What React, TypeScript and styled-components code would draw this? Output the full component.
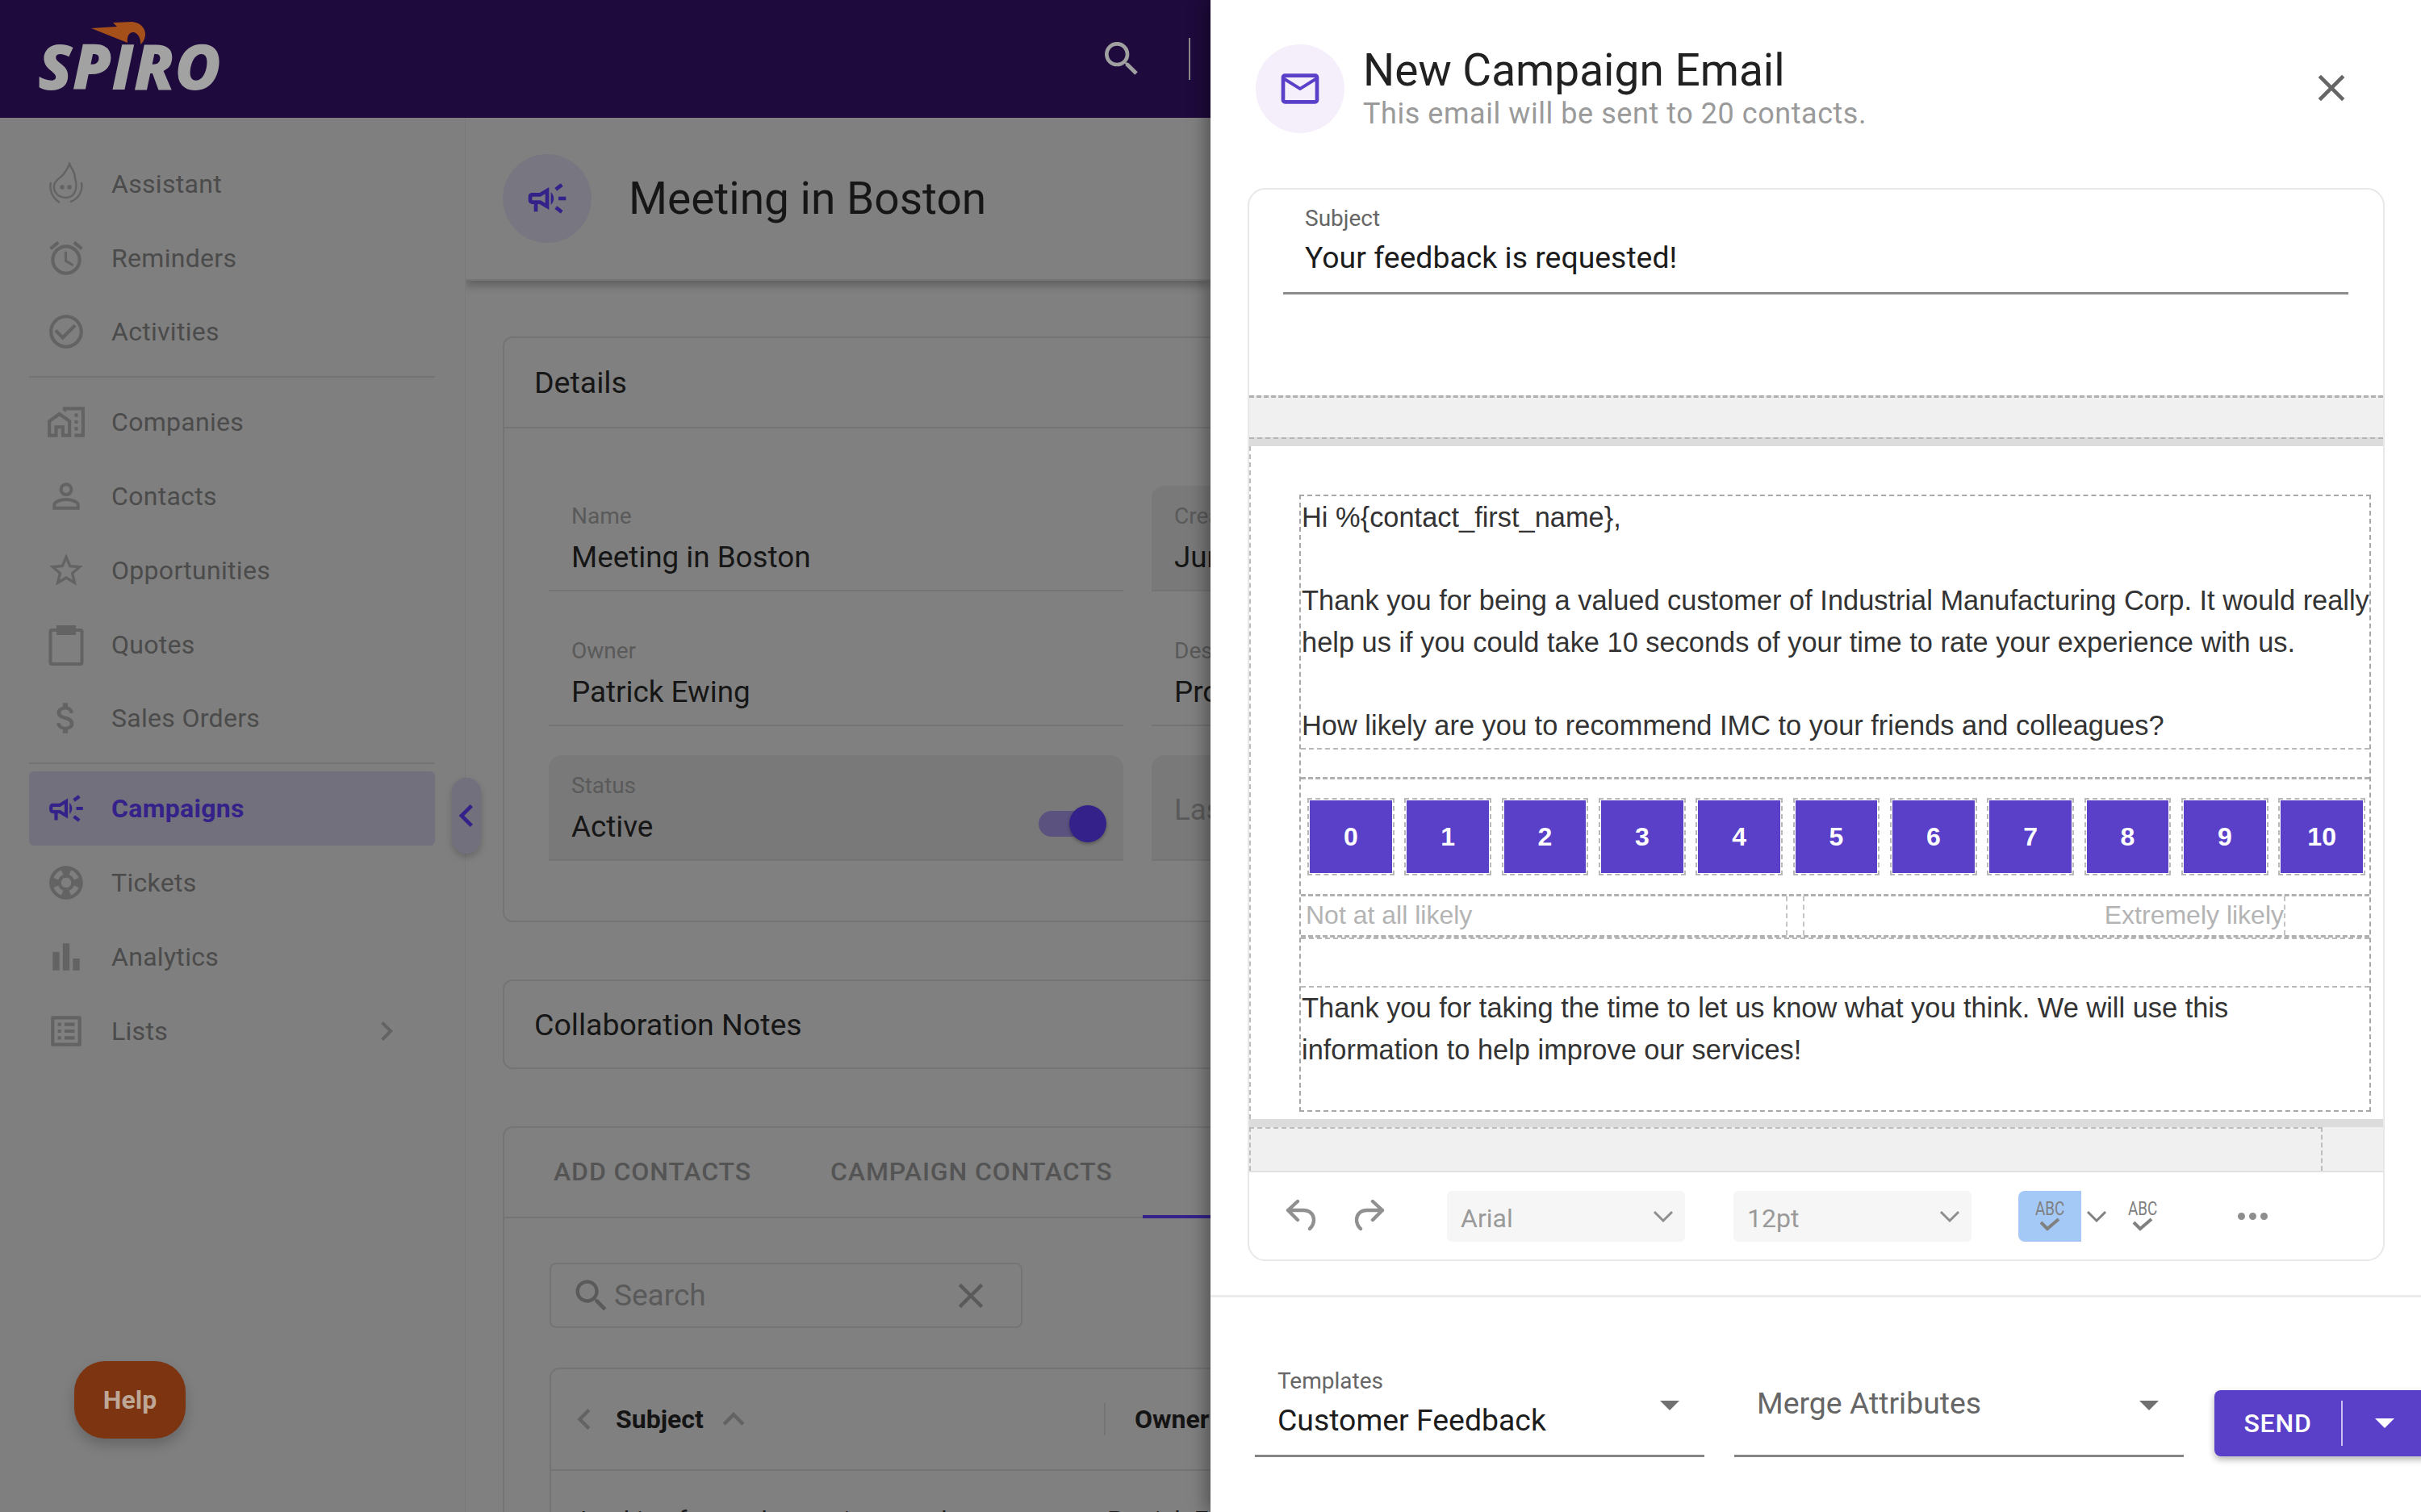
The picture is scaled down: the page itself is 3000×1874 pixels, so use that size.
import React from "react"
import styled, { createGlobalStyle } from "styled-components"
import {
    MdAttachMoney, MdBarChart, MdCheckCircleOutline, MdChevronLeft, MdChevronRight, MdClose,
    MdKeyboardArrowUp, MdListAlt, MdMailOutline, MdOutlineAlarm, MdOutlineCampaign,
    MdOutlineMapsHomeWork, MdPersonOutline, MdSearch, MdStarBorder, MdSupport,
} from "react-icons/md"

const GlobalStyle = createGlobalStyle`
    html, body {
        margin: 0;
        padding: 0;
        background: #808080;
    }
    * {
        box-sizing: border-box;
    }
`

const Page = styled.div`
    display: flex;
    width: 3000px;
    height: 1874px;
    overflow: hidden;
    font-family: Roboto, "Liberation Sans", sans-serif;
`

const Backdrop = styled.div`
    display: flex;
    flex-direction: column;
    flex: 0 0 1500px;
    min-width: 0;
    background: #808080;
`

const TopBar = styled.header`
    flex: 0 0 146px;
    display: flex;
    align-items: center;
    padding: 0 25px 0 47px;
    background: #1e0a3c;
`

const Logo = styled.div`
    position: relative;
    width: 228px;
    height: 146px;
    display: flex;
    align-items: flex-end;
    padding-bottom: 26px;
    font-family: "Open Sans", Lato, sans-serif;
    font-size: 78px;
    line-height: 1;
    font-weight: 800;
    font-style: italic;
    color: #a2a2a2;
    svg {
        position: absolute;
        left: 65px;
        top: 27px;
    }
`

const TopSearch = styled.div`
    margin-left: auto;
    display: flex;
    color: #a0a0a0;
    margin-right: 55px;
`

const TopDivider = styled.div`
    width: 2px;
    height: 52px;
    background: #8a8a8a;
`

const Body = styled.div`
    flex: 1;
    min-height: 0;
    display: flex;
`

const Sidebar = styled.nav`
    position: relative;
    flex: 0 0 577px;
    padding: 36px 37px 0 36px;
    background: #7f7f7f;
    border-right: 1px solid #7a7a7a;
`

const NavRow = styled.div<{ $active?: boolean }>`
    display: flex;
    align-items: center;
    height: 91.8px;
    padding-left: 21px;
    border-radius: 6px;
    background: ${props => props.$active ? "#72707c" : "transparent"};
    color: ${props => props.$active ? "#34228a" : "#4b4b4b"};
    font-size: 32px;
    letter-spacing: 0.3px;
    font-weight: ${props => props.$active ? 700 : 400};
`

const NavIcon = styled.span<{ $active?: boolean }>`
    flex: 0 0 50px;
    min-width: 0;
    display: flex;
    justify-content: center;
    margin-right: 31px;
    color: ${props => props.$active ? "#34228a" : "#636363"};
`

const NavArrow = styled.span`
    display: flex;
    margin-left: auto;
    margin-right: 36px;
    color: #636363;
`

const NavDivider = styled.div<{ $h: number }>`
    height: ${props => props.$h}px;
    display: flex;
    align-items: center;
    &::before {
        content: "";
        width: 100%;
        height: 2px;
        background: #737373;
    }
`

const CollapseHandle = styled.div`
    position: absolute;
    left: 560px;
    top: 818px;
    width: 36px;
    height: 94px;
    border-radius: 18px;
    display: flex;
    align-items: center;
    justify-content: center;
    background: #72707c;
    box-shadow: 0 4px 8px rgba(0, 0, 0, 0.2);
    color: #34228a;
    svg {
        flex: none;
    }
`

const HelpButton = styled.div`
    position: absolute;
    left: 92px;
    top: 1541px;
    width: 138px;
    height: 96px;
    border-radius: 38px;
    display: flex;
    align-items: center;
    justify-content: center;
    background: #7d3411;
    box-shadow: 0 8px 16px rgba(0, 0, 0, 0.2);
    color: #bda797;
    font-size: 32px;
    font-weight: 700;
`

const Main = styled.main`
    flex: 1;
    min-width: 0;
    overflow: hidden;
    display: flex;
    flex-direction: column;
`

const TitleBar = styled.div`
    flex: 0 0 202px;
    display: flex;
    align-items: center;
    gap: 46px;
    padding: 0 0 0 46px;
    border-bottom: 2px solid #747474;
    box-shadow: 0 6px 10px rgba(0, 0, 0, 0.25);
    margin-bottom: 69px;
`

const TitleCircle = styled.div`
    width: 110px;
    height: 110px;
    border-radius: 50%;
    display: flex;
    align-items: center;
    justify-content: center;
    background: #787680;
    color: #34228a;
`

const PageTitle = styled.h1`
    margin: 0;
    font-size: 55px;
    font-weight: 400;
    color: #161616;
    white-space: nowrap;
`

const Stack = styled.div`
    display: flex;
    flex-direction: column;
    gap: 71px;
    width: 1500px;
    margin-left: 46px;
`

const Card = styled.section`
    border: 2px solid #747474;
    border-radius: 12px;
    background: #808080;
`

const CardHead = styled.div<{ $line?: boolean }>`
    height: ${props => props.$line ? "112px" : "107px"};
    display: flex;
    align-items: center;
    padding-left: 37px;
    font-size: 37.5px;
    color: #161616;
    border-bottom: ${props => props.$line ? "2px solid #747474" : "none"};
`

const FieldGrid = styled.div`
    display: grid;
    grid-template-columns: 712px 712px;
    column-gap: 35px;
    row-gap: 36px;
    padding: 71px 0 74px 55px;
`

const Field = styled.div<{ $filled?: boolean }>`
    position: relative;
    height: 131px;
    padding: 22px 0 0 28px;
    border-bottom: 2px solid #747474;
    border-radius: 16px 16px 0 0;
    background: ${props => props.$filled ? "#797979" : "transparent"};
    overflow: hidden;
`

const FieldLabel = styled.div`
    font-size: 28px;
    line-height: 32px;
    color: #5a5a5a;
`

const FieldValue = styled.div`
    margin-top: 13px;
    font-size: 36.8px;
    line-height: 44px;
    color: #161616;
    white-space: nowrap;
`

const FieldHint = styled(FieldValue)`
    margin-top: 24px;
    color: #5a5a5a;
`

const Toggle = styled.div`
    position: absolute;
    right: 29px;
    top: 69px;
    width: 76px;
    height: 32px;
    border-radius: 16px;
    background: #5b5280;
    &::after {
        content: "";
        position: absolute;
        right: -8px;
        top: -7px;
        width: 46px;
        height: 46px;
        border-radius: 50%;
        background: #34228a;
        box-shadow: 0 2px 4px rgba(0, 0, 0, 0.3);
    }
`

const Tabs = styled.div`
    display: flex;
    align-items: stretch;
    height: 112px;
    padding-left: 61px;
    padding-bottom: 2px;
    border-bottom: 2px solid #747474;
`

const Tab = styled.div`
    display: flex;
    align-items: center;
    margin-right: 98px;
    font-size: 32px;
    font-weight: 500;
    letter-spacing: 0.9px;
    color: #545454;
    white-space: nowrap;
`

const ActiveTab = styled.div`
    width: 300px;
    margin-left: -60px;
    border-bottom: 4px solid #34228a;
    margin-bottom: -4px;
`

const SearchBox = styled.div`
    display: flex;
    align-items: center;
    width: 586px;
    height: 81px;
    margin: 55px 0 49px 56px;
    padding: 0 36px 0 24px;
    border: 2px solid #747474;
    border-radius: 8px;
    color: #5a5a5a;
    font-size: 37px;
    svg {
        flex: none;
    }
`

const SearchText = styled.span`
    margin-left: 2px;
    flex: 1;
`

const TableCard = styled.div`
    margin-left: 56px;
    border: 2px solid #747474;
    border-radius: 12px 0 0 0;
`

const TableHead = styled.div`
    display: flex;
    align-items: center;
    height: 126px;
    border-bottom: 2px solid #747474;
    font-size: 32px;
    font-weight: 700;
    color: #141414;
`

const SubjectHead = styled.div`
    flex: 0 0 687px;
    display: flex;
    align-items: center;
    height: 40px;
    padding-left: 15px;
    border-right: 2px solid #747474;
    color: #141414;
    svg {
        flex: none;
        color: #636363;
    }
`

const SubjectLabel = styled.span`
    margin: 0 10px 0 13px;
`

const OwnerHead = styled.div`
    padding-left: 36px;
`

const TableRow = styled(TableHead)`
    height: 90px;
    align-items: flex-start;
    padding-top: 42px;
    border-bottom: none;
    font-weight: 400;
    color: #1a1a1a;
`

const RowSubject = styled.div`
    flex: 0 0 689px;
    padding-left: 36px;
`

const Drawer = styled.aside`
    position: relative;
    flex: 0 0 1500px;
    width: 1500px;
    min-width: 0;
    display: flex;
    flex-direction: column;
    background: #fff;
    box-shadow: -6px 0 20px rgba(0, 0, 0, 0.35);
`

const DrawerHead = styled.div`
    flex: 0 0 233px;
    display: flex;
    align-items: flex-start;
    gap: 23px;
    padding: 55px 83px 0 56px;
`

const MailCircle = styled.div`
    flex: 0 0 110px;
    height: 110px;
    border-radius: 50%;
    display: flex;
    align-items: center;
    justify-content: center;
    background: #f5effc;
    color: #5a3fc9;
`

const DrawerTitles = styled.div`
    flex: 1;
    padding-top: 2px;
`

const DrawerTitle = styled.h2`
    margin: 0;
    font-size: 55px;
    line-height: 60px;
    font-weight: 400;
    color: #212121;
`

const DrawerSub = styled.div`
    margin-top: 2px;
    font-size: 36px;
    line-height: 44px;
    letter-spacing: 0.55px;
    color: #9a9a9a;
`

const CloseButton = styled.div`
    display: flex;
    margin-top: 26px;
    color: #666;
`

const Composer = styled.section`
    flex: 0 0 1330px;
    margin: 0 45px 0 46px;
    display: flex;
    flex-direction: column;
    border: 2px solid #e8e8e8;
    border-radius: 22px;
    overflow: hidden;
`

const SubjectBlock = styled.div`
    flex: 0 0 255px;
    padding: 18px 43px 0 42px;
`

const SubjectField = styled.div`
    height: 112px;
    padding: 2px 0 0 27px;
    border-bottom: 3px solid #8c8c8c;
`

const SubjectCaption = styled.div`
    font-size: 28px;
    line-height: 32px;
    color: #666;
`

const SubjectValue = styled.div`
    margin-top: 10px;
    font-size: 37.4px;
    line-height: 44px;
    color: #1c1c1c;
`

const BandLight = styled.div`
    flex: 0 0 52px;
    background: #f0f0f0;
    border-top: 3px dashed #b0b0b0;
`

const BandDark = styled.div`
    flex: 0 0 11px;
    background: #dcdcdc;
    border-top: 2px dashed #b5b5b5;
`

const EmailArea = styled.div`
    flex: 0 0 834px;
    padding: 60px 15px 9px 60px;
    border-left: 2px dashed #bdbdbd;
`

const EmailBox = styled.div`
    height: 765px;
    display: flex;
    flex-direction: column;
    border: 2px dashed #a8a8a8;
    font-family: "Liberation Sans", Arial, sans-serif;
    font-size: 34.4px;
    color: #333;
`

const Copy = styled.div<{ $h: number; $shift: number }>`
    flex: none;
    height: ${props => props.$h}px;
    padding: ${props => props.$shift}px 0 0 1px;
    line-height: 51.6px;
    white-space: nowrap;
`

const BlankRow = styled.div<{ $h: number }>`
    flex: none;
    height: ${props => props.$h}px;
    border-top: 2px dashed #b8b8b8;
`

const RatingRow = styled.div`
    display: grid;
    grid-template-columns: repeat(11, 1fr);
    column-gap: 18.6px;
    padding: 26px 8px 26px 11px;
    border-top: 3px dashed #b0b0b0;
`

const RatingCell = styled.div`
    height: 90px;
    display: flex;
    align-items: center;
    justify-content: center;
    background: #5a3fc9;
    outline: 2px dashed #b8b8b8;
    outline-offset: 1px;
    color: #fff;
    font-size: 32px;
    font-weight: 700;
`

const ScaleRow = styled.div`
    display: flex;
    height: 55px;
    border-top: 3px dashed #b0b0b0;
    border-bottom: 3px dashed #b0b0b0;
    color: #b4b4b4;
    font-size: 32px;
    line-height: 46px;
`

const ScaleCell = styled.div<{ $w: number; $right?: boolean }>`
    flex: 0 0 ${props => props.$w}px;
    padding-left: 6px;
    text-align: ${props => props.$right ? "right" : "left"};
    border-right: 2px dashed #c4c4c4;
    padding-right: ${props => props.$right ? "0" : "6px"};
`

const BottomDark = styled.div`
    flex: 0 0 10px;
    background: #dcdcdc;
`

const BottomLight = styled.div`
    flex: 1;
    background: #f0f0f0;
    border-bottom: 2px solid #e0e0e0;
`

const BottomFrame = styled.div`
    width: 1330px;
    height: 100%;
    border-top: 2px dashed #bdbdbd;
    border-left: 2px dashed #bdbdbd;
    border-right: 2px dashed #bdbdbd;
`

const EditorBar = styled.div`
    flex: 0 0 108px;
    display: flex;
    align-items: flex-start;
    padding: 23px 0 0 45px;
    color: #8e8e8e;
`

const BarIcon = styled.span<{ $left: number; $top: number }>`
    display: flex;
    margin-left: ${props => props.$left}px;
    margin-top: ${props => props.$top}px;
`

const BarSelect = styled.div<{ $left: number }>`
    flex: 0 0 295px;
    height: 63px;
    margin-left: ${props => props.$left}px;
    display: flex;
    align-items: center;
    justify-content: space-between;
    padding: 0 14px 0 17px;
    border-radius: 6px;
    background: #f6f6f6;
    font-size: 32px;
    color: #9a9a9a;
`

const BarSelectText = styled.span`
    padding-top: 4px;
`

const SpellButton = styled.div<{ $active?: boolean; $left: number }>`
    flex: 0 0 78px;
    height: 63px;
    margin-left: ${props => props.$left}px;
    display: flex;
    flex-direction: column;
    align-items: center;
    justify-content: center;
    border-radius: 8px 0 0 8px;
    background: ${props => props.$active ? "#a5c9f7" : "transparent"};
    color: #808080;
`

const AbcText = styled.span`
    font-size: 23px;
    line-height: 20px;
    transform: scaleX(0.82);
`

const Dots = styled.div`
    display: flex;
    gap: 5px;
    margin: 27px 0 0 79px;
    span {
        width: 9px;
        height: 9px;
        border-radius: 50%;
        background: #8e8e8e;
    }
`

const Footer = styled.div`
    flex: 1;
    margin-top: 42px;
    display: flex;
    align-items: flex-end;
    padding: 0 0 67px 55px;
    border-top: 3px solid #ececec;
`

const SelectField = styled.div<{ $gap: number }>`
    position: relative;
    flex: 0 0 557px;
    height: 110px;
    margin-right: ${props => props.$gap}px;
    margin-bottom: 1px;
    padding-left: 28px;
    border-bottom: 3px solid #858585;
`

const SelectCaption = styled.div`
    font-size: 28px;
    line-height: 32px;
    color: #666;
`

const SelectValue = styled.div`
    margin-top: 10px;
    font-size: 37.4px;
    line-height: 44px;
    color: #1c1c1c;
`

const SelectHint = styled.div`
    margin-top: 21px;
    font-size: 37.4px;
    line-height: 44px;
    color: #666;
`

const Caret = styled.span<{ $light?: boolean }>`
    width: 0;
    height: 0;
    border-left: 12px solid transparent;
    border-right: 12px solid transparent;
    border-top: 12px solid ${props => props.$light ? "#fff" : "#707070"};
`

const FieldCaret = styled(Caret)`
    position: absolute;
    right: 31px;
    top: 40px;
`

const SendGroup = styled.div`
    flex: 0 0 256px;
    height: 82px;
    margin-bottom: 2px;
    display: flex;
    align-items: center;
    border-radius: 8px 0 0 8px;
    background: #5a3fc9;
    box-shadow: 0 4px 8px rgba(0, 0, 0, 0.3);
    color: #fff;
    font-size: 32px;
    font-weight: 500;
    letter-spacing: 0.8px;
`

const SendLabel = styled.div`
    flex: 0 0 159px;
    height: 56px;
    display: flex;
    align-items: center;
    justify-content: center;
    border-right: 2px solid #c9c0ef;
`

const SendCaret = styled.div`
    flex: 1;
    display: flex;
    justify-content: center;
    padding-right: 42px;
    margin-left: 40px;
`

const AssistantIcon = () => (
    <svg width="46" height="54" viewBox="0 0 46 54" fill="none" stroke="#636363" strokeWidth="2.4">
        <path d="M27 2C29 8 34 11 34 20C38 33 33 44 23 44C13 44 7 37 8 29C9 21 18 19 21 13C24 9 26 6 27 2Z" />
        <path d="M4 25C2 33 5 44 15 50M42 25C44 36 38 46 28 49" />
        <circle cx="18" cy="31" r="1.6" fill="#636363" />
        <circle cx="27" cy="31" r="1.6" fill="#636363" />
    </svg>
)

const ClipboardIcon = () => (
    <svg width="44" height="52" viewBox="0 0 44 52" fill="none" stroke="#636363" strokeWidth="4">
        <rect x="2.5" y="8" width="39" height="42" rx="2" />
        <path d="M12 4H32V12H12Z" fill="#636363" />
    </svg>
)

const Chevron = ({ color = "#8e8e8e" }: { color?: string }) => (
    <svg width="26" height="16" viewBox="0 0 26 16" fill="none" stroke={color} strokeWidth="3">
        <path d="M2 2L13 13L24 2" />
    </svg>
)

const Undo = ({ flip }: { flip?: boolean }) => (
    <svg width="38" height="40" viewBox="0 0 38 40" fill="none" stroke="#909090" strokeWidth="4.4"
         strokeLinecap="round" strokeLinejoin="round" transform={flip ? "scale(-1 1)" : undefined}>
        <path d="M15 3L3 14L15 26M3 14H22C30 14 35 19 35 26C35 31 33 34 30 37" />
    </svg>
)

const Check = () => (
    <svg width="26" height="18" viewBox="0 0 26 18" fill="none" stroke="#808080" strokeWidth="4">
        <path d="M2 6L10 14L24 2" />
    </svg>
)

const mainNav = [
    { label: "Assistant", icon: <AssistantIcon /> },
    { label: "Reminders", icon: <MdOutlineAlarm size={54} /> },
    { label: "Activities", icon: <MdCheckCircleOutline size={56} /> },
]

const recordNav = [
    { label: "Companies", icon: <MdOutlineMapsHomeWork size={56} /> },
    { label: "Contacts", icon: <MdPersonOutline size={56} /> },
    { label: "Opportunities", icon: <MdStarBorder size={54} /> },
    { label: "Quotes", icon: <ClipboardIcon /> },
    { label: "Sales Orders", icon: <MdAttachMoney size={52} /> },
]

const toolNav = [
    { label: "Tickets", icon: <MdSupport size={54} /> },
    { label: "Analytics", icon: <MdBarChart size={54} /> },
    { label: "Lists", icon: <MdListAlt size={54} />, more: true },
]

const scores = [0, 1, 2, 3, 4, 5, 6, 7, 8, 9, 10]

const App: React.FC = () => {
    return <>
        <GlobalStyle />
        <Page>
            <Backdrop>
                <TopBar>
                    <Logo>
                        SPIRO
                        <svg width="68" height="28" viewBox="0 0 68 28" fill="#a5501a">
                            <path d="M1 8L33 6L28 1L52 0C62 1 68 8 68 15C68 20 66 25 62 28C63 20 58 13 53 13C48 13 45 18 46 26Z" />
                        </svg>
                    </Logo>
                    <TopSearch><MdSearch size={56} /></TopSearch>
                    <TopDivider />
                </TopBar>
                <Body>
                    <Sidebar>
                        {mainNav.map(item => (
                            <NavRow key={item.label}><NavIcon>{item.icon}</NavIcon>{item.label}</NavRow>
                        ))}
                        <NavDivider $h={20} />
                        {recordNav.map(item => (
                            <NavRow key={item.label}><NavIcon>{item.icon}</NavIcon>{item.label}</NavRow>
                        ))}
                        <NavDivider $h={20} />
                        <NavRow $active><NavIcon $active><MdOutlineCampaign size={56} /></NavIcon>Campaigns</NavRow>
                        {toolNav.map(item => (
                            <NavRow key={item.label}>
                                <NavIcon>{item.icon}</NavIcon>{item.label}
                                {item.more && <NavArrow><MdChevronRight size={48} /></NavArrow>}
                            </NavRow>
                        ))}
                        <CollapseHandle><MdChevronLeft size={56} /></CollapseHandle>
                        <HelpButton>Help</HelpButton>
                    </Sidebar>
                    <Main>
                        <TitleBar>
                            <TitleCircle><MdOutlineCampaign size={56} /></TitleCircle>
                            <PageTitle>Meeting in Boston</PageTitle>
                        </TitleBar>
                        <Stack>
                            <Card>
                                <CardHead $line>Details</CardHead>
                                <FieldGrid>
                                    <Field><FieldLabel>Name</FieldLabel><FieldValue>Meeting in Boston</FieldValue></Field>
                                    <Field $filled><FieldLabel>Created</FieldLabel><FieldValue>June 12, 2020</FieldValue></Field>
                                    <Field><FieldLabel>Owner</FieldLabel><FieldValue>Patrick Ewing</FieldValue></Field>
                                    <Field><FieldLabel>Description</FieldLabel><FieldValue>Promote the event</FieldValue></Field>
                                    <Field $filled><FieldLabel>Status</FieldLabel><FieldValue>Active</FieldValue><Toggle /></Field>
                                    <Field $filled><FieldHint>Last Modified</FieldHint></Field>
                                </FieldGrid>
                            </Card>
                            <Card><CardHead>Collaboration Notes</CardHead></Card>
                            <Card>
                                <Tabs>
                                    <Tab>ADD CONTACTS</Tab>
                                    <Tab>CAMPAIGN CONTACTS</Tab>
                                    <ActiveTab />
                                </Tabs>
                                <SearchBox>
                                    <MdSearch size={52} />
                                    <SearchText>Search</SearchText>
                                    <MdClose size={52} />
                                </SearchBox>
                                <TableCard>
                                    <TableHead>
                                        <SubjectHead>
                                            <MdChevronLeft size={52} />
                                            <SubjectLabel>Subject</SubjectLabel>
                                            <MdKeyboardArrowUp size={54} />
                                        </SubjectHead>
                                        <OwnerHead>Owner</OwnerHead>
                                    </TableHead>
                                    <TableRow>
                                        <RowSubject>Looking forward to seeing you there</RowSubject>
                                        <div>Patrick Ewing</div>
                                    </TableRow>
                                </TableCard>
                            </Card>
                        </Stack>
                    </Main>
                </Body>
            </Backdrop>
            <Drawer>
                <DrawerHead>
                    <MailCircle><MdMailOutline size={56} /></MailCircle>
                    <DrawerTitles>
                        <DrawerTitle>New Campaign Email</DrawerTitle>
                        <DrawerSub>This email will be sent to 20 contacts.</DrawerSub>
                    </DrawerTitles>
                    <CloseButton><MdClose size={56} /></CloseButton>
                </DrawerHead>
                <Composer>
                    <SubjectBlock>
                        <SubjectField>
                            <SubjectCaption>Subject</SubjectCaption>
                            <SubjectValue>Your feedback is requested!</SubjectValue>
                        </SubjectField>
                    </SubjectBlock>
                    <BandLight />
                    <BandDark />
                    <EmailArea>
                        <EmailBox>
                            <Copy $h={312} $shift={1}>
                                Hi %{"{"}contact_first_name{"}"},<br /><br />
                                Thank you for being a valued customer of Industrial Manufacturing Corp. It would really<br />
                                help us if you could take 10 seconds of your time to rate your experience with us.<br /><br />
                                How likely are you to recommend IMC to your friends and colleagues?
                            </Copy>
                            <BlankRow $h={36} />
                            <RatingRow>
                                {scores.map(score => <RatingCell key={score}>{score}</RatingCell>)}
                            </RatingRow>
                            <ScaleRow>
                                <ScaleCell $w={603}>Not at all likely</ScaleCell>
                                <ScaleCell $w={21} />
                                <ScaleCell $w={596} $right>Extremely likely</ScaleCell>
                            </ScaleRow>
                            <BlankRow $h={60} />
                            <BlankRow $h={154}>
                                <Copy $h={104} $shift={0}>
                                    Thank you for taking the time to let us know what you think. We will use this<br />
                                    information to help improve our services!
                                </Copy>
                            </BlankRow>
                        </EmailBox>
                    </EmailArea>
                    <BottomDark />
                    <BottomLight><BottomFrame /></BottomLight>
                    <EditorBar>
                        <BarIcon $left={0} $top={10}><Undo /></BarIcon>
                        <BarIcon $left={47} $top={10}><Undo flip /></BarIcon>
                        <BarSelect $left={77}><BarSelectText>Arial</BarSelectText><Chevron /></BarSelect>
                        <BarSelect $left={60}><BarSelectText>12pt</BarSelectText><Chevron /></BarSelect>
                        <SpellButton $active $left={58}><AbcText>ABC</AbcText><Check /></SpellButton>
                        <BarIcon $left={6} $top={24}><Chevron color="#808080" /></BarIcon>
                        <SpellButton $left={5}><AbcText>ABC</AbcText><Check /></SpellButton>
                        <Dots><span /><span /><span /></Dots>
                    </EditorBar>
                </Composer>
                <Footer>
                    <SelectField $gap={37}>
                        <SelectCaption>Templates</SelectCaption>
                        <SelectValue>Customer Feedback</SelectValue>
                        <FieldCaret />
                    </SelectField>
                    <SelectField $gap={38}>
                        <SelectHint>Merge Attributes</SelectHint>
                        <FieldCaret />
                    </SelectField>
                    <SendGroup>
                        <SendLabel>SEND</SendLabel>
                        <SendCaret><Caret $light /></SendCaret>
                    </SendGroup>
                </Footer>
            </Drawer>
        </Page>
    </>
}

export default App
